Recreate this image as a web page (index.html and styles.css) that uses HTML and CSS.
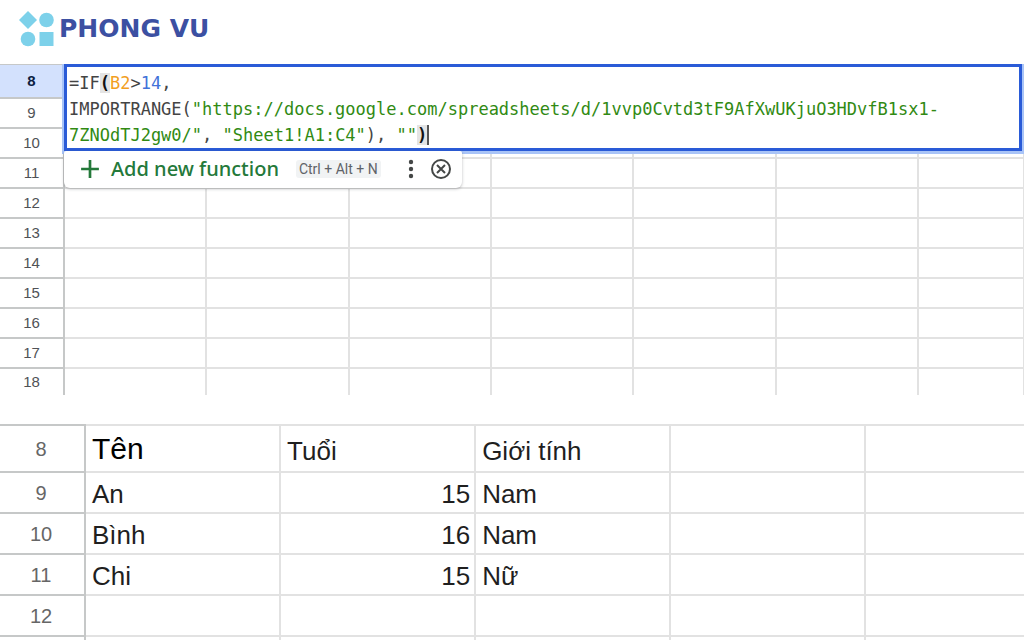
FILE: index.html
```html
<!DOCTYPE html>
<html lang="vi">
<head>
<meta charset="utf-8">
<meta name="viewport" content="width=device-width, initial-scale=1">
<title>Phong Vu</title>
<link rel="stylesheet" href="styles.css">
</head>
<body>
<header class="brand">
  <svg class="brand-mark" viewBox="0 0 36 36" aria-hidden="true">
    <path d="M9 0 18 9 9 18 0 9Z"/>
    <circle cx="27.500" cy="9" r="7.300"/>
    <circle cx="9" cy="28" r="7.300"/>
    <path d="M20.500 21H34.500V35H20.500Z"/>
  </svg>
  <span class="brand-name">PHONG VU</span>
</header>
<main>
  <section class="sheet-editing">
    <table class="grid grid-small">
      <colgroup><col class="col-head"><col class="col"><col class="col"><col class="col"><col class="col"><col class="col"><col class="col"><col></colgroup>
      <tbody>
        <tr class="active"><th scope="row">8</th><td></td><td></td><td></td><td></td><td></td><td></td><td></td></tr>
        <tr><th scope="row">9</th><td></td><td></td><td></td><td></td><td></td><td></td><td></td></tr>
        <tr><th scope="row">10</th><td></td><td></td><td></td><td></td><td></td><td></td><td></td></tr>
        <tr><th scope="row">11</th><td></td><td></td><td></td><td></td><td></td><td></td><td></td></tr>
        <tr><th scope="row">12</th><td></td><td></td><td></td><td></td><td></td><td></td><td></td></tr>
        <tr><th scope="row">13</th><td></td><td></td><td></td><td></td><td></td><td></td><td></td></tr>
        <tr><th scope="row">14</th><td></td><td></td><td></td><td></td><td></td><td></td><td></td></tr>
        <tr><th scope="row">15</th><td></td><td></td><td></td><td></td><td></td><td></td><td></td></tr>
        <tr><th scope="row">16</th><td></td><td></td><td></td><td></td><td></td><td></td><td></td></tr>
        <tr><th scope="row">17</th><td></td><td></td><td></td><td></td><td></td><td></td><td></td></tr>
        <tr class="cut"><th scope="row">18</th><td></td><td></td><td></td><td></td><td></td><td></td><td></td></tr>
      </tbody>
    </table>
    <div class="overlay">
      <div class="formula" role="textbox" aria-multiline="true" aria-label="Formula" contenteditable="true" spellcheck="false">=IF<b class="paren">(</b><span class="ref">B2</span>&gt;<span class="num">14</span>,<br>IMPORTRANGE(<span class="str">"https://docs.google.com/spreadsheets/d/1vvp0Cvtd3tF9AfXwUKjuO3HDvfB1sx1-<br>7ZNOdTJ2gw0/"</span>, <span class="str">"Sheet1!A1:C4"</span>), <span class="str">""</span><b class="paren caret">)</b></div>
      <div class="suggest">
        <button class="add" type="button">
          <svg class="plus" viewBox="0 0 18 18" aria-hidden="true"><path d="M9 1V17M1 9H17"/></svg>
          <span>Add new function</span>
        </button>
        <kbd class="keys">Ctrl + Alt + N</kbd>
        <button class="icon-button more" type="button" aria-label="More options">
          <svg class="icon" viewBox="0 0 22 22" aria-hidden="true"><circle cx="11" cy="4" r="2.200"/><circle cx="11" cy="11" r="2.200"/><circle cx="11" cy="18" r="2.200"/></svg>
        </button>
        <button class="icon-button" type="button" aria-label="Close">
          <svg class="icon close" viewBox="0 0 22 22" aria-hidden="true"><circle cx="11" cy="11" r="9"/><path d="M7 7 15 15M15 7 7 15"/></svg>
        </button>
      </div>
    </div>
  </section>
  <table class="grid grid-large">
    <colgroup><col class="col-head"><col class="col"><col class="col"><col class="col"><col class="col"><col></colgroup>
    <tbody>
      <tr class="titles"><th scope="row">8</th><td class="lead">Tên</td><td>Tuổi</td><td>Giới tính</td><td></td><td></td></tr>
      <tr><th scope="row">9</th><td>An</td><td class="number">15</td><td>Nam</td><td></td><td></td></tr>
      <tr><th scope="row">10</th><td>Bình</td><td class="number">16</td><td>Nam</td><td></td><td></td></tr>
      <tr><th scope="row">11</th><td>Chi</td><td class="number">15</td><td>Nữ</td><td></td><td></td></tr>
      <tr><th scope="row">12</th><td></td><td></td><td></td><td></td><td></td></tr>
      <tr class="cut"><th></th><td></td><td></td><td></td><td></td><td></td></tr>
    </tbody>
  </table>
</main>
</body>
</html>
```
FILE: styles.css
```css
* {
  box-sizing: border-box;
}

body {
  margin: 0;
  background: #fff;
  color: #1f1f1f;
  font-family: "Liberation Sans", Arial, sans-serif;
}

.brand {
  display: flex;
  align-items: center;
  gap: 4px;
  height: 64px;
  padding: 0 19px 6px;
}

.brand-mark {
  width: 36px;
  height: 36px;
  fill: #7dd1ea;
}

.brand-name {
  color: #3c50a2;
  font: bold 25px/28px "DejaVu Sans", sans-serif;
}

.grid {
  width: 100%;
  table-layout: fixed;
  border-collapse: separate;
  border-spacing: 0;
}

.grid th,
.grid td {
  padding: 0;
  border: solid #e2e2e2;
  border-width: 0 2px 2px 0;
}

.grid th {
  border-color: #c6c8c8;
  color: #4f5256;
  font-weight: normal;
}

.grid .cut th,
.grid .cut td {
  border-bottom: 0;
}

.sheet-editing {
  position: relative;
  margin-bottom: 29px;
}

.grid-small .col-head {
  width: 65px;
}

.grid-small .col {
  width: 13.9%;
}

.grid-small tr {
  height: 30px;
  font-size: 15px;
  line-height: 18px;
}

.grid-small td:last-child {
  border-right-width: 1px;
}

.grid-small .active {
  height: 35px;
}

.grid-small .active th {
  border-top: 1px solid #c6c8c8;
  background: #d3e1fd;
  color: #0b1d42;
  font-weight: bold;
}

.grid-small .cut {
  height: 26px;
}

.overlay {
  position: absolute;
  top: 0;
  left: 64px;
  right: 2px;
}

.formula {
  padding: 3px 2px 0;
  border: 3px solid #2a5bd7;
  outline: none;
  background: #fff;
  box-shadow: -2px 0 #a9c4f7, 2px 0 #a9c4f7, 0 3px #a9c4f7, -2px 3px #a9c4f7, 2px 3px #a9c4f7;
  color: #444;
  font: 17px/26px "DejaVu Sans Mono", monospace;
  white-space: pre;
}

.paren {
  background: #e4e4e4;
  color: #111;
}

.caret {
  border-right: 2px solid #555;
}

.ref {
  color: #f29f1f;
}

.num {
  color: #4272d9;
}

.str {
  color: #318a13;
}

.suggest {
  position: relative;
  display: flex;
  align-items: center;
  width: max-content;
  height: 37px;
  padding: 0 10px 2px 16px;
  border-radius: 2px 2px 6px 6px;
  background: #fff;
  box-shadow: 0 1px 3px rgba(60, 64, 67, 0.35);
}

.add,
.icon-button {
  display: flex;
  align-items: center;
  padding: 0;
  border: 0;
  background: none;
}

.add {
  gap: 11px;
  color: #24793a;
  font: 500 20px/28px "Noto Sans", sans-serif;
}

.plus {
  width: 20px;
  height: 20px;
  fill: none;
  stroke: currentColor;
  stroke-width: 2.4;
}

.keys {
  margin-left: 17px;
  padding: 0 3px;
  border-radius: 3px;
  background: #f1f3f4;
  color: #5f6368;
  font: 14px/18px Roboto, sans-serif;
}

.icon-button {
  margin-left: 8px;
}

.more {
  margin-left: 19px;
}

.icon {
  width: 22px;
  height: 22px;
  fill: #444746;
}

.close {
  fill: none;
  stroke: #444746;
  stroke-width: 2;
}

.grid-large .col-head {
  width: 86px;
}

.grid-large .col {
  width: 19.05%;
}

.grid-large tr {
  height: 41px;
}

.grid-large .titles {
  height: 49px;
}

.grid-large .titles th,
.grid-large .titles td {
  border-top-width: 2px;
}

.grid-large .cut {
  height: 3px;
}

.grid-large th {
  padding-right: 2px;
  color: #666;
  font-size: 20px;
  line-height: 24px;
}

.grid-large td {
  padding: 0 4px 3px 6px;
  font-size: 26px;
  line-height: 30px;
  vertical-align: bottom;
}

.grid-large td:last-child {
  border-right: 0;
}

.grid-large .titles td {
  padding-bottom: 5px;
}

.grid-large .cut td {
  padding: 0;
}

.grid-large .lead {
  color: #000;
  font-size: 30px;
  line-height: 34px;
}

.grid-large .number {
  text-align: right;
}
```
